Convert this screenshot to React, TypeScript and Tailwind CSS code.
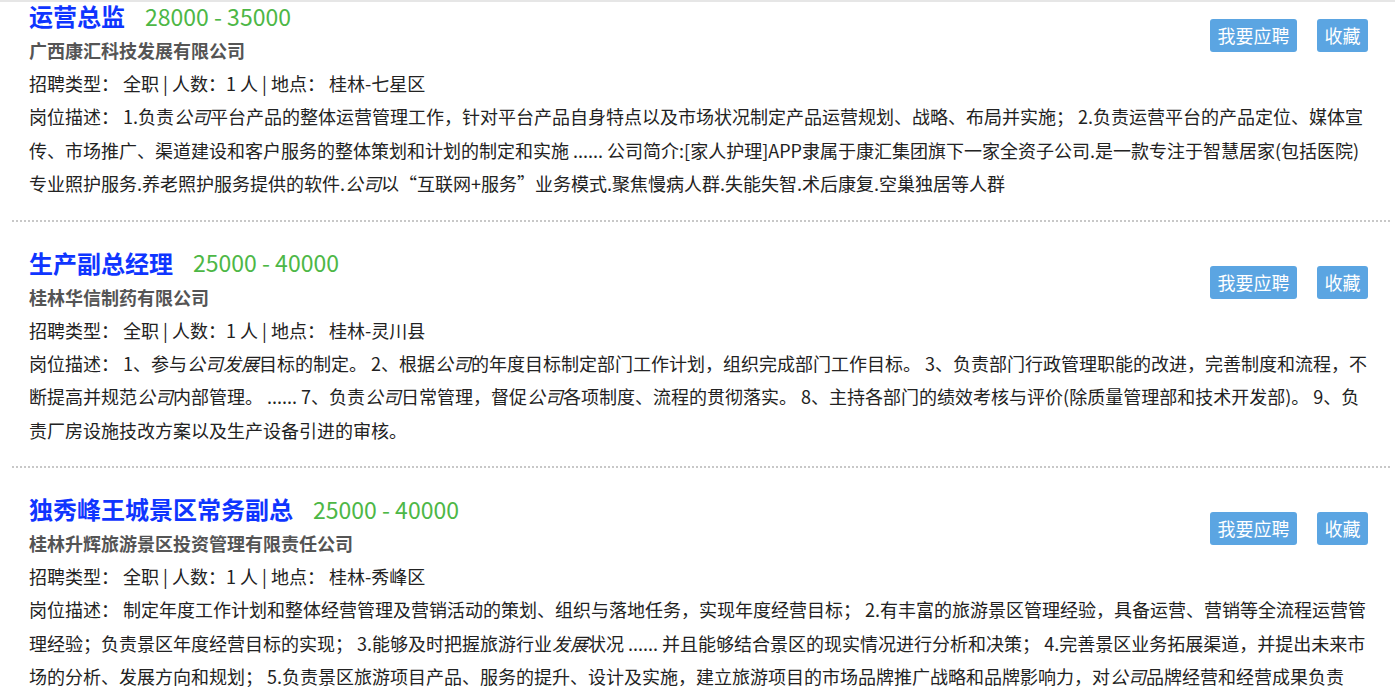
import type { ReactNode } from "react";

type Job = {
  title: string;
  salary: string;
  company: string;
  type: string;
  count: string;
  place: string;
  desc: string;
};

const jobs: Job[] = [
  {
    title: "运营总监",
    salary: "28000 - 35000",
    company: "广西康汇科技发展有限公司",
    type: "全职",
    count: "1 人",
    place: "桂林-七星区",
    desc: "1.负责{公司}平台产品的整体运营管理工作，针对平台产品自身特点以及市场状况制定产品运营规划、战略、布局并实施； 2.负责运营平台的产品定位、媒体宣传、市场推广、渠道建设和客户服务的整体策划和计划的制定和实施 ...... 公司简介:[家人护理]APP隶属于康汇集团旗下一家全资子公司.是一款专注于智慧居家(包括医院)专业照护服务.养老照护服务提供的软件.{公司}以“互联网+服务”业务模式.聚焦慢病人群.失能失智.术后康复.空巢独居等人群",
  },
  {
    title: "生产副总经理",
    salary: "25000 - 40000",
    company: "桂林华信制药有限公司",
    type: "全职",
    count: "1 人",
    place: "桂林-灵川县",
    desc: "1、参与{公司发展}目标的制定。 2、根据{公司}的年度目标制定部门工作计划，组织完成部门工作目标。 3、负责部门行政管理职能的改进，完善制度和流程，不断提高并规范{公司}内部管理。 ...... 7、负责{公司}日常管理，督促{公司}各项制度、流程的贯彻落实。 8、主持各部门的绩效考核与评价(除质量管理部和技术开发部)。 9、负责厂房设施技改方案以及生产设备引进的审核。",
  },
  {
    title: "独秀峰王城景区常务副总",
    salary: "25000 - 40000",
    company: "桂林升辉旅游景区投资管理有限责任公司",
    type: "全职",
    count: "1 人",
    place: "桂林-秀峰区",
    desc: "制定年度工作计划和整体经营管理及营销活动的策划、组织与落地任务，实现年度经营目标； 2.有丰富的旅游景区管理经验，具备运营、营销等全流程运营管理经验；负责景区年度经营目标的实现； 3.能够及时把握旅游行业{发展}状况 ...... 并且能够结合景区的现实情况进行分析和决策； 4.完善景区业务拓展渠道，并提出未来市场的分析、发展方向和规划； 5.负责景区旅游项目产品、服务的提升、设计及实施，建立旅游项目的市场品牌推广战略和品牌影响力，对{公司}品牌经营和经营成果负责",
  },
];

// words wrapped in {} are the highlighted keywords (shown slanted)
const renderDesc = (text: string): ReactNode[] =>
  text.split(/(\{[^}]+\})/).map((part, i) =>
    part.startsWith("{") ? (
      <i key={i} className="italic">
        {part.slice(1, -1)}
      </i>
    ) : (
      <span key={i}>{part}</span>
    ),
  );

const JobItem = ({ job, first }: { job: Job; first?: boolean }) => (
  <div
    className={
      first
        ? "pb-[19px] pl-[17px] pr-[14px]"
        : "border-t-2 border-dotted border-[#c8c8c8] pt-[27px] pb-[19px] pl-[17px] pr-[14px]"
    }
  >
    <div className="float-right mt-[17px] mr-[8px] flex gap-[20px]">
      <button className="h-[33px] w-[87px] rounded-[3px] bg-[#5ba5e2] text-[18px] leading-[33px] text-white">我要应聘</button>
      <button className="h-[33px] w-[51px] rounded-[3px] bg-[#5ba5e2] text-[18px] leading-[33px] text-white">收藏</button>
    </div>
    <div className="flex h-[28px] items-center">
      <span className="text-[24px] font-bold text-[#0f35ff]">{job.title}</span>
      <span className="ml-[20px] text-[23px] text-[#4db746]">{job.salary}</span>
    </div>
    <div className="mt-[3px] h-[34px] text-[18px] leading-[34px] font-bold text-[#555]">{job.company}</div>
    <div className="h-[33px] text-[18px] leading-[33px] text-[#222]">
      招聘类型： {job.type} | 人数：{job.count} | 地点： {job.place}
    </div>
    <p className="text-[18px] leading-[33.5px] text-[#222]">岗位描述： {renderDesc(job.desc)}</p>
  </div>
);

export default function App() {
  return (
    <div className="min-h-screen border-t-2 border-[#e6e6e6] bg-white font-['Microsoft_YaHei','Noto_Sans_CJK_SC',sans-serif]">
      <div className="ml-[12px] mr-[5px]">
        {jobs.map((job, i) => (
          <JobItem key={job.title} job={job} first={i === 0} />
        ))}
      </div>
    </div>
  );
}
